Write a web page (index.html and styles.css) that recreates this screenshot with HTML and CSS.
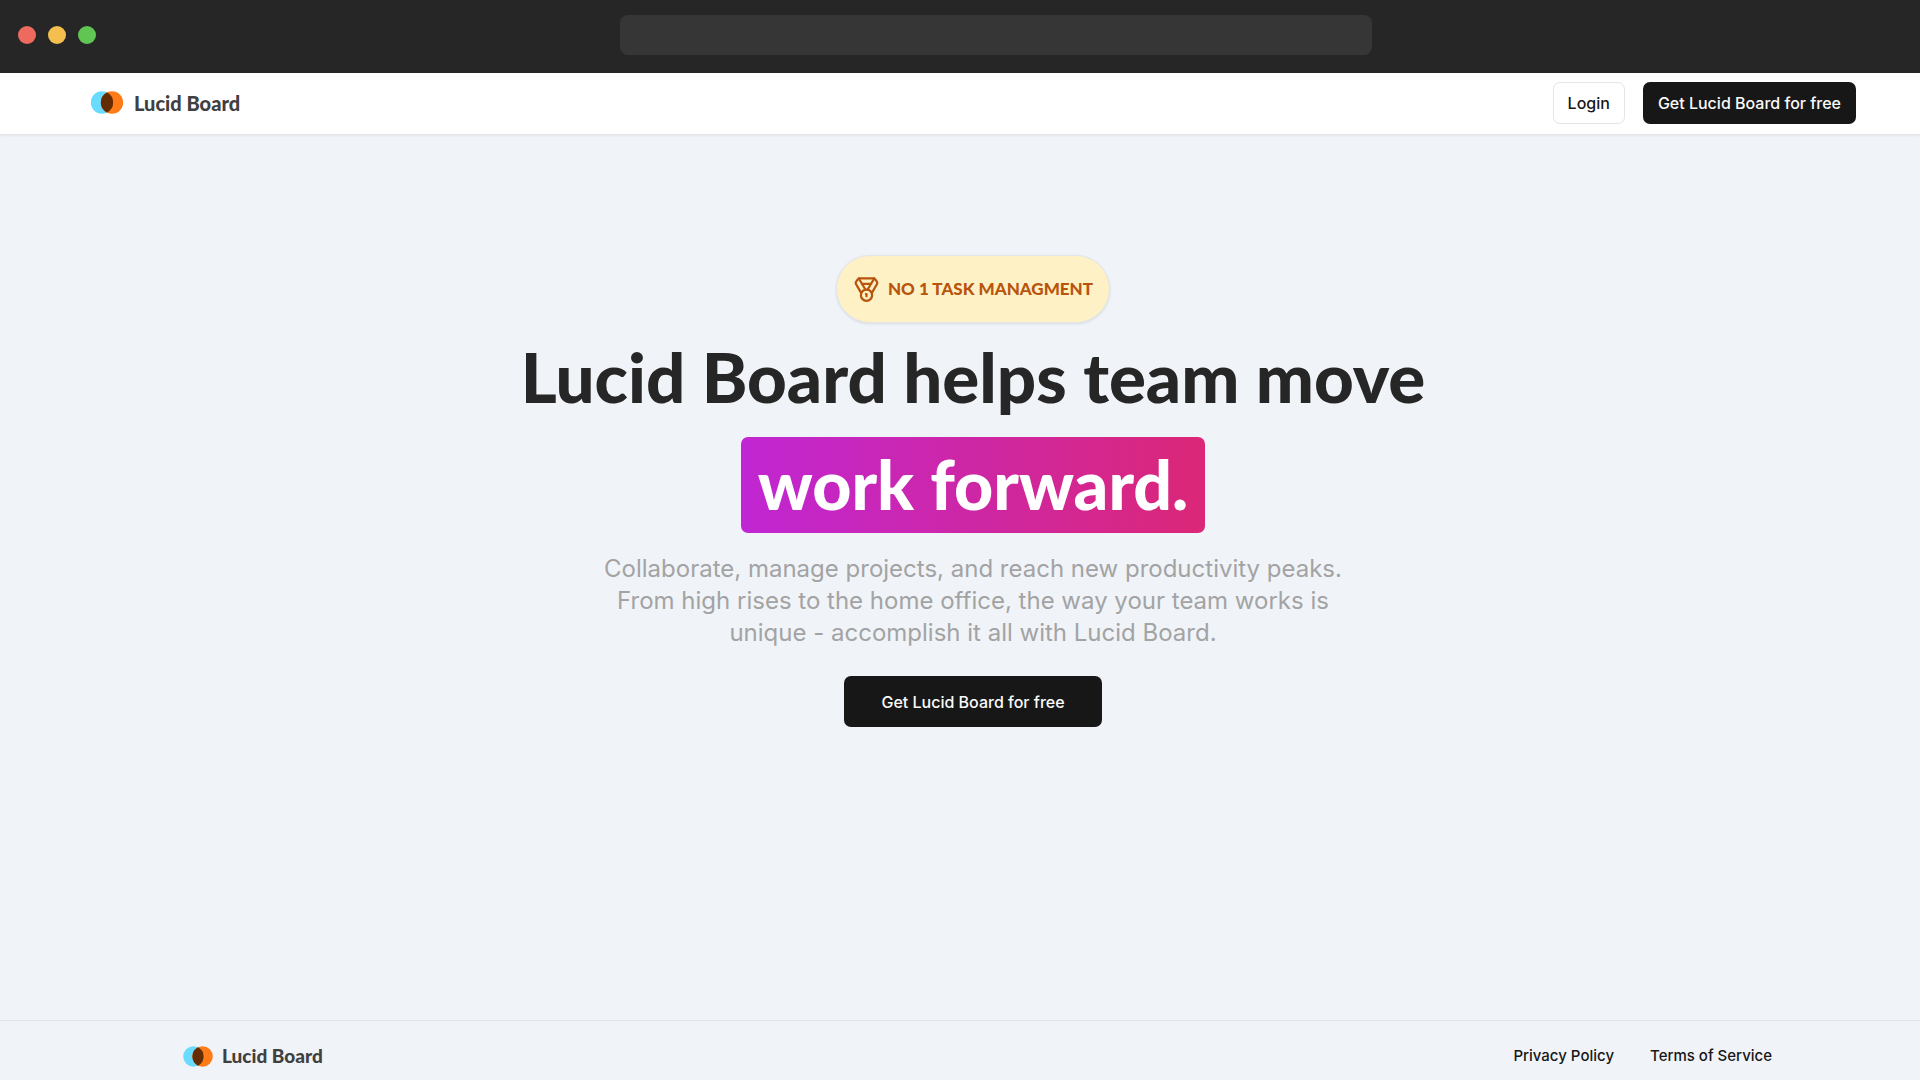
FILE: index.html
```html
<!DOCTYPE html>
<html lang="en">
<head>
<meta charset="utf-8">
<title>Lucid Board</title>
<link rel="stylesheet" href="styles.css">
</head>
<body>
<div class="chrome">
  <div class="lights"><span class="light red"></span><span class="light yellow"></span><span class="light green"></span></div>
  <input class="address" type="text" aria-label="Address">
</div>
<header class="nav">
  <a class="brand" href="#">
    <svg class="brand-mark" viewBox="0 0 32 23" aria-hidden="true"><circle cx="11" cy="11.5" r="11.2" fill="#69dbff"/><circle cx="21" cy="11.5" r="11.2" fill="#ff7b17"/><path d="M16 1.5a11.2 11.2 0 0 1 0 20a11.2 11.2 0 0 1 0-20z" fill="#632c05"/></svg>
    <span>Lucid Board</span>
  </a>
  <div class="actions">
    <button class="btn outline" type="button">Login</button>
    <button class="btn dark" type="button">Get Lucid Board for free</button>
  </div>
</header>
<main class="hero">
  <div class="badge">
    <svg class="medal" viewBox="0 0 24 24" fill="none" stroke="currentColor" stroke-width="2" stroke-linecap="round" stroke-linejoin="round" aria-hidden="true"><path d="M7.21 15 2.66 7.14a2 2 0 0 1 .13-2.2L4.4 2.8A2 2 0 0 1 6 2h12a2 2 0 0 1 1.6.8l1.6 2.14a2 2 0 0 1 .14 2.2L16.79 15"/><path d="M11 12 5.12 2.2"/><path d="m13 12 5.88-9.8"/><path d="M8 7h8"/><circle cx="12" cy="17" r="5"/><path d="M12 18v-2h-.5"/></svg>
    <span>NO 1 TASK MANAGMENT</span>
  </div>
  <h1 class="title">Lucid Board helps team move</h1>
  <div class="highlight">work forward.</div>
  <p class="lead">Collaborate, manage projects, and reach new productivity peaks. From high rises to the home office, the way your team works is unique - accomplish it all with Lucid Board.</p>
  <button class="btn dark large" type="button">Get Lucid Board for free</button>
</main>
<footer class="footer">
  <a class="brand small" href="#">
    <svg class="brand-mark" viewBox="0 0 32 23" aria-hidden="true"><circle cx="11" cy="11.5" r="11.2" fill="#69dbff"/><circle cx="21" cy="11.5" r="11.2" fill="#ff7b17"/><path d="M16 1.5a11.2 11.2 0 0 1 0 20a11.2 11.2 0 0 1 0-20z" fill="#632c05"/></svg>
    <span>Lucid Board</span>
  </a>
  <nav class="links"><a href="#">Privacy Policy</a><a href="#">Terms of Service</a></nav>
</footer>
</body>
</html>
```
FILE: styles.css
```css
* { box-sizing: border-box; }
body {
  margin: 0;
  min-height: 100vh;
  display: flex;
  flex-direction: column;
  background: #f0f4f9;
  color: #171717;
  font-family: Inter, "Liberation Sans", sans-serif;
}
a { color: inherit; text-decoration: none; }
.chrome {
  display: grid;
  grid-template-columns: 11fr 752px 10fr;
  align-items: center;
  padding: 15px 0 18px 18px;
  background: #262626;
}
.lights { display: flex; gap: 12px; }
.light { width: 18px; height: 18px; border-radius: 50%; }
.red { background: #ee6a5f; }
.yellow { background: #f5bf4f; }
.green { background: #61c554; }
.address {
  height: 40px;
  border: 0;
  border-radius: 8px;
  background: #363636;
  color: #fff;
}
.nav {
  display: flex;
  align-items: center;
  justify-content: space-between;
  height: 62px;
  padding: 0 64px 2px 91px;
  background: #fff;
  border-bottom: 1px solid #e5e5e5;
  box-shadow: 0 1px 2px rgba(0, 0, 0, .05);
}
.brand {
  display: flex;
  align-items: center;
  gap: 11px;
  color: #404040;
  font: 900 20px/24px Lato, sans-serif;
}
.brand-mark { width: 32px; height: 23px; }
.small { gap: 9px; font-size: 19px; }
.small .brand-mark { width: 30px; height: 21px; }
.actions { display: flex; gap: 18px; }
.btn {
  height: 42px;
  padding: 0 14px;
  border: 1px solid transparent;
  border-radius: 7px;
  font: 500 16px/24px Inter, sans-serif;
}
.outline { background: #fff; border-color: #e5e5e5; color: #171717; }
.dark { background: #171717; color: #fafafa; }
.large { height: 51px; padding: 0 36px; }
.hero {
  flex: 1;
  display: flex;
  flex-direction: column;
  align-items: center;
  padding: 120px 0 120px 26px;
}
.badge {
  display: flex;
  align-items: center;
  gap: 8px;
  height: 68px;
  padding: 0 16px;
  border: 1px solid #e5e5e5;
  border-radius: 34px;
  background: #fef1c6;
  box-shadow: 0 1px 3px rgba(0, 0, 0, .1);
  color: #b9540d;
  font: 900 17px/24px Lato, sans-serif;
}
.medal { width: 27px; height: 27px; }
.title {
  margin: 12px 0 18px;
  color: #262626;
  font: 900 69px/84px Lato, sans-serif;
}
.highlight {
  padding: 5px 17px 7px;
  border-radius: 7px;
  background: linear-gradient(to right, #c026d3, #db2777);
  color: #fff;
  font: 900 68px/84px Lato, sans-serif;
}
.lead {
  max-width: 786px;
  margin: 20px 0 27px;
  color: #a3a3a3;
  font-size: 24px;
  line-height: 32px;
  text-align: center;
}
.footer {
  display: flex;
  align-items: center;
  justify-content: space-between;
  height: 60px;
  padding: 11px 148px 0 183px;
  border-top: 1px solid #e5e5e5;
}
.links { display: flex; gap: 36px; font-size: 15px; line-height: 24px; font-weight: 500; }
```
